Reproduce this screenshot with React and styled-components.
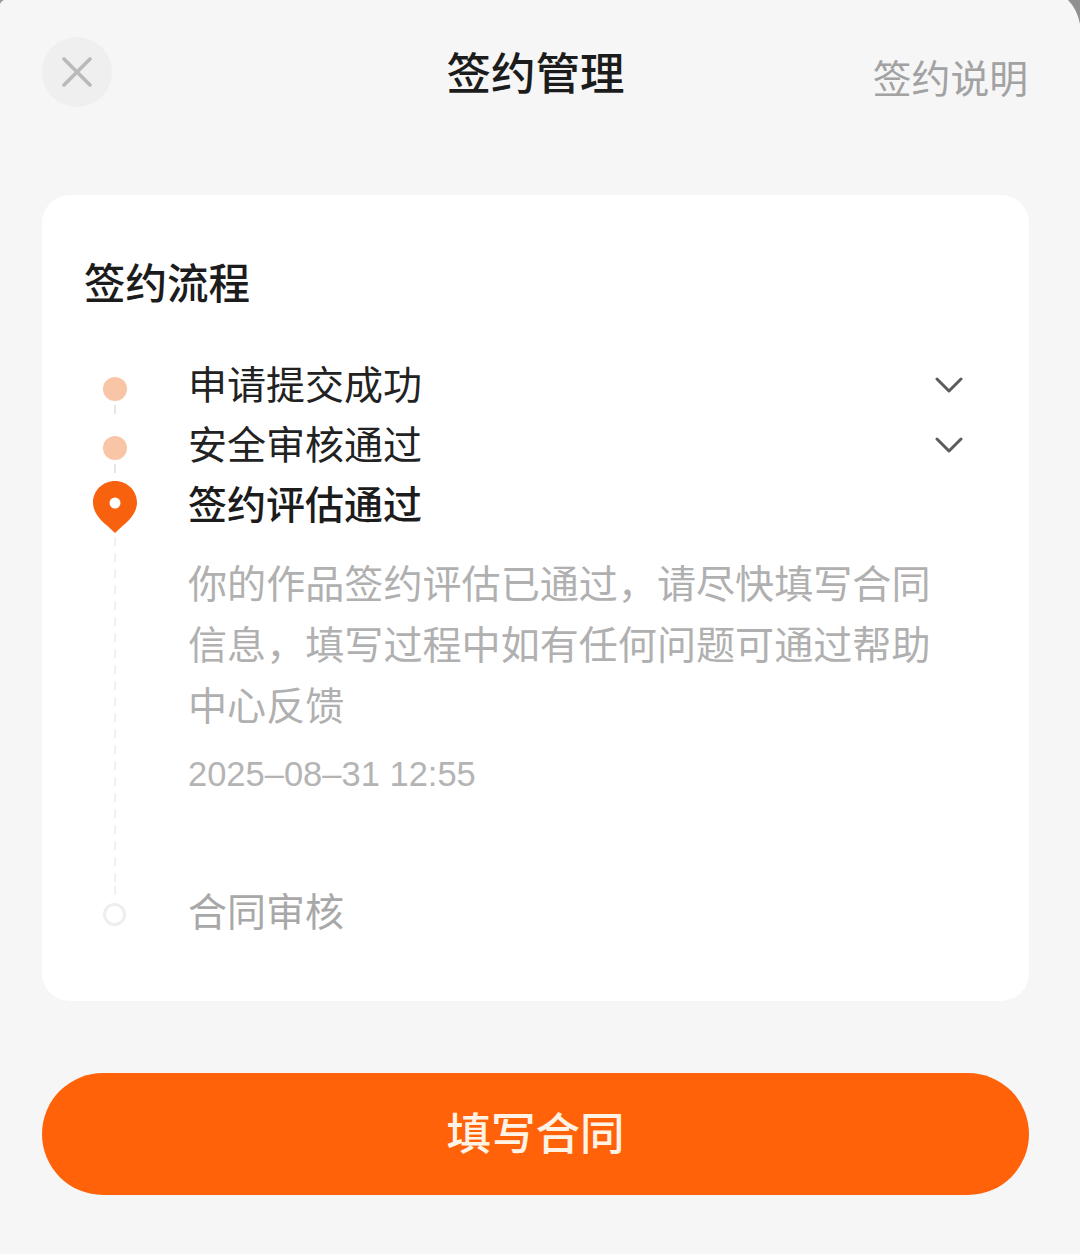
import React from "react";
import styled, { createGlobalStyle } from "styled-components";

const GlobalStyle = createGlobalStyle`
  html, body {
    margin: 0;
    padding: 0;
    background: #f6f6f6;
  }
  * {
    box-sizing: border-box;
  }
`;

const Page = styled.div`
  position: relative;
  width: 1080px;
  height: 1254px;
  padding: 0 51px 0 42px;
  overflow: hidden;
  background: #f6f6f6;
  font-family: "Noto Sans CJK SC", "Noto Sans", sans-serif;
`;

// dark corners of whatever sits behind the sheet
const Corner = styled.svg`
  position: absolute;
  top: 0;
  ${(p) => (p.$left ? "left: 0;" : "right: 0;")}
`;

const Header = styled.header`
  display: grid;
  grid-template-columns: 1fr auto 1fr;
  align-items: start;
  height: 195px;
  padding-top: 37px;
`;

const CloseButton = styled.button`
  display: flex;
  align-items: center;
  justify-content: center;
  width: 70px;
  height: 70px;
  padding: 0;
  border: none;
  border-radius: 50%;
  background: #efefef;
`;

const Title = styled.h1`
  margin: -2px 0 0;
  font-size: 44.5px;
  font-weight: 500;
  line-height: 72px;
  color: #1c1c1c;
`;

const HelpLink = styled.a`
  justify-self: end;
  margin: 14px 1px 0 0;
  font-size: 38.8px;
  line-height: 50px;
  color: #a2a2a2;
`;

const Card = styled.section`
  height: 806px;
  padding: 59px 42px 0;
  border-radius: 28px;
  background: #fff;
`;

const CardTitle = styled.h2`
  margin: 0 0 46px;
  font-size: 41.5px;
  font-weight: 500;
  line-height: 55px;
  color: #1c1c1c;
`;

const Step = styled.div`
  display: grid;
  grid-template-columns: 61px 1fr 54px;
  column-gap: 43px;
`;

const Rail = styled.div`
  display: flex;
  flex-direction: column;
  align-items: center;
  padding-top: ${(p) => p.$top}px;
`;

const Connector = styled.div`
  flex: ${(p) => (p.$height ? `none` : 1)};
  width: 2px;
  height: ${(p) => (p.$height ? `${p.$height}px` : "auto")};
  margin: 4px 0 ${(p) => (p.$height ? 3 : 0)}px;
  background: repeating-linear-gradient(
    to bottom,
    ${(p) => p.$color} 0 9px,
    transparent 9px 16px
  );
`;

const Dot = styled.div`
  flex: none;
  width: 24px;
  height: 24px;
  border-radius: 50%;
  background: #f8c6a6;
`;

const HollowDot = styled.div`
  flex: none;
  width: 23px;
  height: 23px;
  border: 3.5px solid #eeeeee;
  border-radius: 50%;
`;

const Pin = styled.svg`
  flex: none;
`;

const Body = styled.div`
  min-width: 0;
  padding-bottom: 88px;
`;

const StepTitle = styled.div`
  margin: -3px 0 3px;
  font-size: 39px;
  line-height: 60px;
  font-weight: ${(p) => (p.$active ? 500 : 400)};
  color: ${(p) => p.$color || "#222"};
`;

const Description = styled.p`
  width: 760px;
  margin: 19px 0 0;
  font-size: 39.1px;
  line-height: 61px;
  color: #b0b0b0;
`;

const Timestamp = styled.div`
  margin-top: 20px;
  font-family: "Liberation Sans", "Noto Sans CJK SC", sans-serif;
  font-size: 34.5px;
  line-height: 40px;
  color: #b4b4b4;
`;

const Toggle = styled.div`
  display: flex;
  justify-content: flex-start;
  padding: 21px 0 0 2px;
`;

const SubmitButton = styled.button`
  display: block;
  width: 100%;
  height: 122px;
  margin-top: 72px;
  padding: 0 0 7px;
  border: none;
  border-radius: 61px;
  background: #ff6208;
  font-family: inherit;
  font-size: 44.5px;
  font-weight: 500;
  color: #fff3e6;
`;

const CloseIcon = () => (
  <svg width="34" height="34" viewBox="0 0 34 34" fill="none">
    <path
      d="M4 4L30 30M30 4L4 30"
      stroke="#bababa"
      strokeWidth="3.6"
      strokeLinecap="round"
    />
  </svg>
);

const ChevronIcon = () => (
  <svg width="28" height="18" viewBox="0 0 28 18" fill="none">
    <path
      d="M2 3L14 15L26 3"
      stroke="#5c5c5c"
      strokeWidth="3"
      strokeLinecap="round"
      strokeLinejoin="round"
    />
  </svg>
);

const PinIcon = () => (
  <Pin width="44" height="52" viewBox="0 0 44 52">
    <path
      d="M22 0C34.2 0 44 9.6 44 21.6C44 30.5 37.5 38.5 30 44.5L22 52L14 44.5C6.5 38.5 0 30.5 0 21.6C0 9.6 9.8 0 22 0Z"
      fill="#f8620f"
    />
    <circle cx="22" cy="22" r="5.5" fill="#fff" />
  </Pin>
);

function App() {
  return (
    <Page>
      <GlobalStyle />
      <Corner $left width="4" height="4" viewBox="0 0 4 4">
        <path d="M0 0H4Q1 1 0 4Z" fill="#9a9a8a" />
      </Corner>
      <Corner width="12" height="24" viewBox="0 0 12 24">
        <path d="M0 0H12V24Q9 9 0 0Z" fill="#909090" />
      </Corner>

      <Header>
        <CloseButton aria-label="关闭">
          <CloseIcon />
        </CloseButton>
        <Title>签约管理</Title>
        <HelpLink>签约说明</HelpLink>
      </Header>

      <Card>
        <CardTitle>签约流程</CardTitle>

        <Step>
          <Rail $top={22}>
            <Dot />
            <Connector $color="#e6e6e6" />
          </Rail>
          <StepTitle>申请提交成功</StepTitle>
          <Toggle>
            <ChevronIcon />
          </Toggle>
        </Step>

        <Step>
          <Rail $top={21}>
            <Dot />
            <Connector $color="#e6e6e6" />
          </Rail>
          <StepTitle>安全审核通过</StepTitle>
          <Toggle>
            <ChevronIcon />
          </Toggle>
        </Step>

        <Step>
          <Rail $top={6}>
            <PinIcon />
            <Connector $color="#f1f1f1" />
          </Rail>
          <Body>
            <StepTitle $active $color="#1c1c1c">
              签约评估通过
            </StepTitle>
            <Description>
              你的作品签约评估已通过，请尽快填写合同信息，填写过程中如有任何问题可通过帮助中心反馈
            </Description>
            <Timestamp>2025–08–31 12:55</Timestamp>
          </Body>
          <div />
        </Step>

        <Step>
          <Rail $top={0}>
            <Connector $color="#f1f1f1" $height={14} />
            <HollowDot />
          </Rail>
          <StepTitle $color="#a8a8a8">合同审核</StepTitle>
          <div />
        </Step>
      </Card>

      <SubmitButton>填写合同</SubmitButton>
    </Page>
  );
}

export default App;
